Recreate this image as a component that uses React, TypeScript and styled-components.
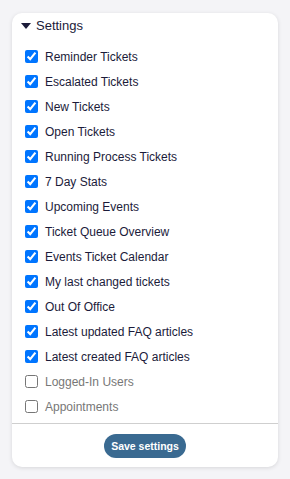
import { useState } from "react";
import styled, { createGlobalStyle } from "styled-components";

const items = [
  { label: "Reminder Tickets", on: true },
  { label: "Escalated Tickets", on: true },
  { label: "New Tickets", on: true },
  { label: "Open Tickets", on: true },
  { label: "Running Process Tickets", on: true },
  { label: "7 Day Stats", on: true },
  { label: "Upcoming Events", on: true },
  { label: "Ticket Queue Overview", on: true },
  { label: "Events Ticket Calendar", on: true },
  { label: "My last changed tickets", on: true },
  { label: "Out Of Office", on: true },
  { label: "Latest updated FAQ articles", on: true },
  { label: "Latest created FAQ articles", on: true },
  { label: "Logged-In Users", on: false },
  { label: "Appointments", on: false },
];

export default function App() {
  const [checked, setChecked] = useState(items.map((i) => i.on));

  const toggle = (idx: number) =>
    setChecked((prev) => prev.map((v, i) => (i === idx ? !v : v)));

  return (
    <>
      <GlobalStyle />
      <Card>
        <Header>
          <Caret />
          <Title>Settings</Title>
        </Header>

        <List>
          {items.map((item, idx) => (
            <Row key={item.label}>
              <Box
                type="checkbox"
                checked={checked[idx]}
                onChange={() => toggle(idx)}
              />
              <Label $muted={!checked[idx]}>{item.label}</Label>
            </Row>
          ))}
        </List>

        <Footer>
          <SaveButton>Save settings</SaveButton>
        </Footer>
      </Card>
    </>
  );
}

/* -------------------- Styled Components -------------------- */

const GlobalStyle = createGlobalStyle`
  body {
    margin: 0;
    background: #f4f4f7;
    font-family: "Liberation Sans", Arial, sans-serif;
  }
`;

const Card = styled.div`
  margin: 13px 12px 12px;
  height: 454px;
  box-sizing: border-box;
  background: #fff;
  border-radius: 10px;
  box-shadow: 0 1px 4px rgba(0, 0, 0, 0.12);
  display: flex;
  flex-direction: column;
`;

const Header = styled.div`
  height: 25px;
  padding-left: 9px;
  display: flex;
  align-items: center;
  gap: 5px;
`;

const Caret = styled.span`
  width: 0;
  height: 0;
  border-left: 5px solid transparent;
  border-right: 5px solid transparent;
  border-top: 6px solid #1b1b3a;
`;

const Title = styled.span`
  font-size: 13px;
  color: #1b1b3a;
`;

const List = styled.div`
  margin-top: 6px;
  padding-bottom: 4px;
  border-bottom: 1px solid #cfcfcf;
  display: flex;
  flex-direction: column;
`;

const Row = styled.label`
  height: 25px;
  padding-left: 13px;
  display: flex;
  align-items: center;
  gap: 7px;
  cursor: pointer;
`;

const Box = styled.input`
  width: 13px;
  height: 13px;
  margin: 0;
  accent-color: #0075ff;
`;

const Label = styled.span<{ $muted: boolean }>`
  font-size: 12px;
  color: ${(p) => (p.$muted ? "#777777" : "#1b1b3a")};
`;

const Footer = styled.div`
  padding-top: 10px;
  display: flex;
  justify-content: center;
`;

const SaveButton = styled.button`
  width: 82px;
  height: 24px;
  padding: 0;
  border: none;
  border-radius: 12px;
  background: #3a6a91;
  color: #fff;
  font-family: "Liberation Sans", Arial, sans-serif;
  font-size: 10.5px;
  font-weight: bold;
  cursor: pointer;
`;
